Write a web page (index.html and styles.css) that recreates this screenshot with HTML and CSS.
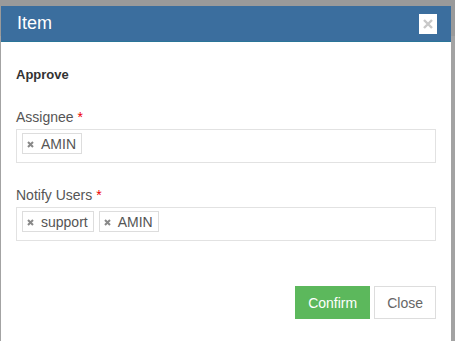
FILE: index.html
```html
<!DOCTYPE html>
<html>
<head>
  <title>Item</title>
  <link rel="stylesheet" href="styles.css">
</head>
<body>
  <div class="modal">
    <div class="modal-header">
      <h4 class="modal-title">Item</h4>
      <button class="btn-x" type="button">
        <svg width="10" height="10" viewBox="0 0 10 10"><path d="M1 1L9 9M9 1L1 9" stroke="#c8c8c8" stroke-width="2.4"/></svg>
      </button>
    </div>

    <div class="modal-body">
      <div class="step">Approve</div>

      <div class="field">
        <label>Assignee <span class="req">*</span></label>
        <div class="tag-box">
          <span class="tag"><svg class="tag-x" viewBox="0 0 7 7"><path d="M1 1L6 6M6 1L1 6"/></svg>AMIN</span>
        </div>
      </div>

      <div class="field">
        <label>Notify Users <span class="req">*</span></label>
        <div class="tag-box">
          <span class="tag"><svg class="tag-x" viewBox="0 0 7 7"><path d="M1 1L6 6M6 1L1 6"/></svg>support</span>
          <span class="tag"><svg class="tag-x" viewBox="0 0 7 7"><path d="M1 1L6 6M6 1L1 6"/></svg>AMIN</span>
        </div>
      </div>
    </div>

    <div class="modal-footer">
      <button class="btn btn-success" type="button">Confirm</button>
      <button class="btn btn-default" type="button">Close</button>
    </div>
  </div>
</body>
</html>
```

FILE: styles.css
```css
html, body {
  height: 100%;
}
body {
  margin: 0;
  font-family: 'Liberation Sans', Arial, sans-serif;
  background: linear-gradient(#9a9a9a 36px, #a3a3a3 36px);
  color: #333;
  overflow: hidden;
}
.modal {
  margin: 6px 0 0 1px;
  width: 450px;
  height: 335px;
  background: white;
}
.modal-header {
  display: flex;
  align-items: center;
  justify-content: space-between;
  height: 35px;
  padding: 0 14px 0 16px;
  background-color: #3b6e9e;
  border-bottom: 1px solid #2b7598;
}
.modal-title {
  margin: 0;
  font-size: 18px;
  font-weight: normal;
  color: white;
}
.btn-x {
  width: 18px;
  height: 20px;
  padding: 0;
  border: none;
  background: white;
  display: flex;
  align-items: center;
  justify-content: center;
}
.modal-body {
  padding: 25px 15px 0 15px;
}
.step {
  font-size: 13px;
  font-weight: bold;
  margin-bottom: 27px;
}
.field {
  margin-bottom: 24px;
}
label {
  display: block;
  font-size: 14px;
  color: #555;
  margin-bottom: 4px;
}
.req {
  color: #e00;
}
.tag-box {
  height: 34px;
  border: 1px solid #e2e2e2;
  padding: 3px 5px;
  box-sizing: border-box;
  display: flex;
  align-items: flex-start;
  gap: 5px;
}
.tag {
  display: inline-flex;
  align-items: center;
  height: 21px;
  padding: 0 5px 0 4px;
  border: 1px solid #ddd;
  box-sizing: border-box;
  font-size: 14px;
  color: #555;
}
.tag-x {
  width: 7px;
  height: 7px;
  margin: 2px 7px 0 0;
  stroke: #888;
  stroke-width: 2;
}
.modal-footer {
  display: flex;
  justify-content: flex-end;
  gap: 4px;
  padding: 21px 15px 0 0;
}
.btn {
  height: 33px;
  padding: 0 12px;
  font-family: inherit;
  font-size: 14px;
  border: 1px solid transparent;
}
.btn-success {
  background-color: #5cb85c;
  border-color: #5cb85c;
  color: white;
}
.btn-default {
  background: white;
  border-color: #ddd;
  color: #666;
}
```
